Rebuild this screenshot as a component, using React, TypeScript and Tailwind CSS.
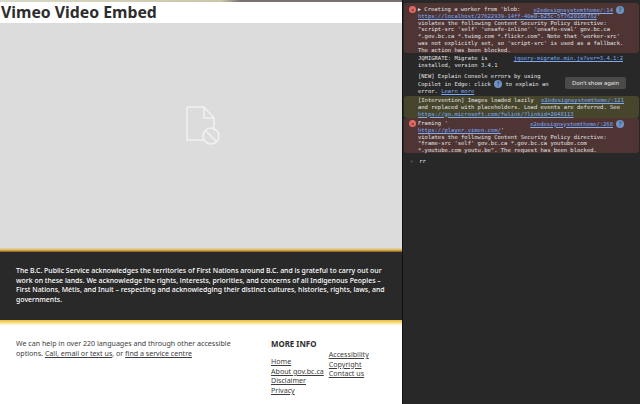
const consoleFont = { fontFamily: '"DejaVu Sans Mono", monospace' };

function Ref({ children }: { children: React.ReactNode }) {
  return <span className="text-[#7cacf8] underline">{children}</span>;
}

function Help() {
  return (
    <span className="inline-flex h-[8px] w-[8px] items-center justify-center rounded-full bg-[#6f93c4] align-middle text-[6px] leading-none text-[#24323f]">
      ?
    </span>
  );
}

function ErrorDot({ className }: { className: string }) {
  return (
    <span className={`absolute left-[5px] flex h-[7px] w-[7px] items-center justify-center rounded-full bg-[#e46962] text-[6px] leading-none text-[#4e3534] ${className}`}>
      ×
    </span>
  );
}

export default function App() {
  return (
    <div className="flex h-[404px] w-[640px] overflow-hidden bg-white" style={{ fontFamily: '"Noto Sans", sans-serif' }}>
      <main className="flex w-[402px] shrink-0 flex-col">
        <div className="h-[2px] bg-[linear-gradient(90deg,#d8d8c8_0%,#c9c8a8_55%,#77716f_60%,#77716f_100%)]" />
        <h1 className="h-[21px] pl-[1px] text-[15.8px] font-bold leading-[21px] text-[#2d2d2d]">Vimeo Video Embed</h1>
        <div className="flex h-[225px] items-center justify-center bg-[#dcdcdc] pb-[20px] pl-[5px]">
          <svg width="36" height="40" viewBox="0 0 36 40" fill="none" stroke="#f1f1f1" strokeWidth="1.6">
            <path d="M1 1h17l10 11v13M18 1v11h10M1 1v33h17" />
            <circle cx="25" cy="30" r="8" />
            <path d="M19.5 24.5l11 11" />
          </svg>
        </div>
        <div className="h-[4px] bg-[linear-gradient(#dccfa8,#e6c87a_35%,#8a5a10)]" />
        <section className="h-[68px] bg-[#292929] px-[16px] pt-[14px] text-[6.93px] font-medium leading-[9.6px] text-white">
          The B.C. Public Service acknowledges the territories of First Nations around B.C. and is grateful to carry out our work on these lands. We acknowledge the rights, interests, priorities, and concerns of all Indigenous Peoples – First Nations, Métis, and Inuit – respecting and acknowledging their distinct cultures, histories, rights, laws, and governments.
        </section>
        <div className="h-[5px] bg-[linear-gradient(#e8b93e,#f6dc7a_50%,#fffbe6)]" />
        <footer className="flex flex-1 pl-[16px] pt-[13px] text-[7.1px] leading-[9.7px] text-[#3d3d3d]">
          <p className="w-[255px] shrink-0 pr-[15px] leading-[10px]">
            We can help in over 220 languages and through other accessible options. <span className="underline">Call, email or text us</span>, or <span className="underline">find a service centre</span>
          </p>
          <div className="flex gap-[5px]">
            <div>
              <h2 className="text-[7.9px] font-bold leading-[12px] text-[#2d2d2d]">MORE INFO</h2>
              <ul className="mt-[7px] underline">
                <li>Home</li>
                <li>About gov.bc.ca</li>
                <li>Disclaimer</li>
                <li>Privacy</li>
              </ul>
            </div>
            <ul className="pt-[12px] underline">
              <li>Accessibility</li>
              <li>Copyright</li>
              <li>Contact us</li>
            </ul>
          </div>
        </footer>
      </main>
      <aside className="flex-1 whitespace-nowrap border-l border-[#111] bg-[#282828] pt-[3px] text-[5.5px] leading-[6.8px] text-[#e3e3e3]" style={consoleFont}>
        <div className="relative mx-[1px] h-[50px] rounded-[3px] bg-[#4e3534] pl-[14px] pr-[15px] pt-[3px]">
          <ErrorDot className="top-[3px]" />
          <div className="float-right flex items-center gap-[3px]"><Ref>e2edesignsystemtheme/:14</Ref><Help /></div>
          <span className="text-[5px]">▶</span> Creating a worker from 'blob:
          <br />
          <Ref>https://localhost/27622939-14ff-40a0-b25c-5f7620166782</Ref>'
          <br />
          violates the following Content Security Policy directive:
          <br />
          "script-src 'self' 'unsafe-inline' 'unsafe-eval' gov.bc.ca
          <br />
          *.gov.bc.ca *.twimg.com *.flickr.com". Note that 'worker-src'
          <br />
          was not explicitly set, so 'script-src' is used as a fallback.
          <br />
          The action has been blocked.
        </div>
        <div className="flex h-[20px] justify-between pl-[15px] pr-[17px] pt-[2px]">
          <span>JQMIGRATE: Migrate is<br />installed, version 3.4.1</span>
          <Ref>jquery-migrate.min.js?ver=3.4.1:2</Ref>
        </div>
        <div className="flex h-[23px] items-start pl-[15px] pr-[14px]">
          <p>
            [NEW] Explain Console errors by using
            <br />
            Copilot in Edge: click <Help /> to explain an
            <br />
            error. <Ref>Learn more</Ref>
          </p>
          <span className="ml-auto mt-[4px] flex h-[12px] w-[61px] items-center justify-center rounded-[2px] bg-[#4a4a4a] text-[5.8px] text-[#e8e8e8]" style={{ fontFamily: '"Noto Sans", sans-serif' }}>
            Don't show again
          </span>
        </div>
        <div className="mx-[1px] h-[22px] rounded-[3px] bg-[#47452c] pl-[14px] pr-[15px] pt-[1px]">
          <div className="float-right"><Ref>e2edesignsystemtheme/:121</Ref></div>
          [Intervention] Images loaded lazily
          <br />
          and replaced with placeholders. Load events are deferred. See
          <br />
          <Ref>https://go.microsoft.com/fwlink/?linkid=2048113</Ref>
        </div>
        <div className="relative mx-[1px] h-[35px] rounded-[3px] bg-[#4e3534] pl-[14px] pr-[15px] pt-[2px]">
          <ErrorDot className="top-[2px]" />
          <div className="float-right flex items-center gap-[3px]"><Ref>e2edesignsystemtheme/:268</Ref><Help /></div>
          Framing '
          <br />
          <Ref>https://player.vimeo.com/</Ref>'
          <br />
          violates the following Content Security Policy directive:
          <br />
          "frame-src 'self' gov.bc.ca *.gov.bc.ca youtube.com
          <br />
          *.youtube.com youtu.be". The request has been blocked.
        </div>
        <div className="flex gap-[6px] pl-[7px] pt-[5px]">
          <span className="text-[#9aa0a6]">›</span>
          <span>rr</span>
        </div>
      </aside>
    </div>
  );
}
